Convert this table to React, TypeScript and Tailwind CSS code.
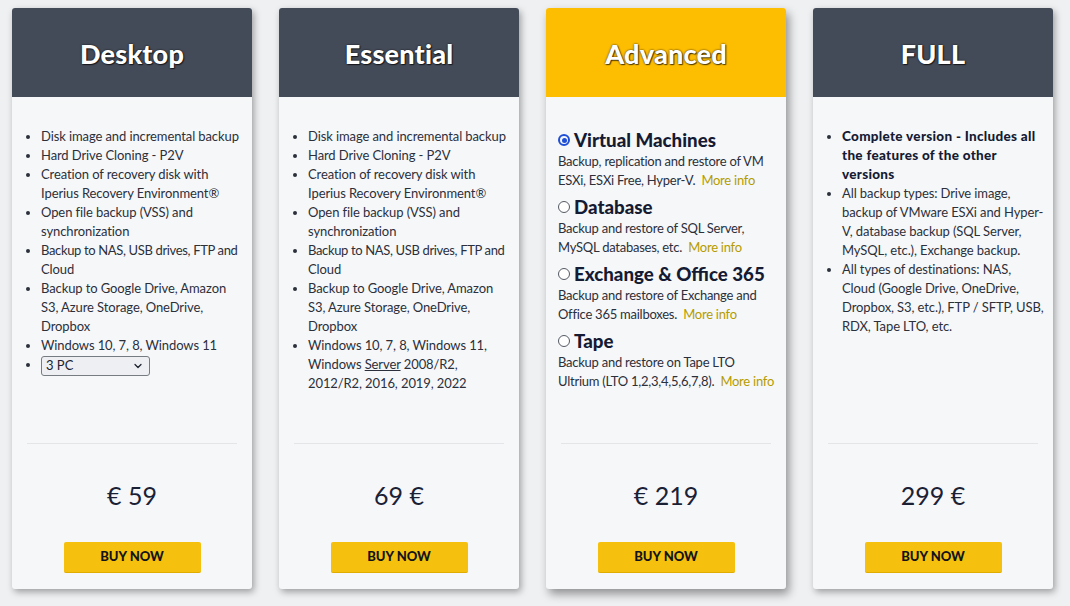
import { ChevronDown } from 'lucide-react';

const FONT = "font-['Lato',_'Open_Sans',_sans-serif]";

type Plan = {
  title: string;
  accent?: boolean;
  price: string;
  body: React.ReactNode;
};

const MORE = 'text-[#b49c00]';

function Bullets({ items }: { items: React.ReactNode[] }) {
  return (
    <ul className="list-disc pl-[14px] pt-[1px] text-[13px] leading-[19px] tracking-[-0.1px] text-[#2b303b] marker:text-[#2b303b]">
      {items.map((it, i) => (
        <li key={i}>{it}</li>
      ))}
    </ul>
  );
}

function Radio({ checked }: { checked?: boolean }) {
  return checked ? (
    <span className="mr-[4px] inline-flex h-[12px] w-[12px] shrink-0 items-center justify-center rounded-full border-[2px] border-[#1f4fd6]">
      <span className="h-[5px] w-[5px] rounded-full bg-[#1f4fd6]" />
    </span>
  ) : (
    <span className="mr-[4px] inline-block h-[12px] w-[12px] shrink-0 rounded-full border-[1.5px] border-[#555a63] bg-white" />
  );
}

function Module({ title, checked, children }: { title: string; checked?: boolean; children: React.ReactNode }) {
  return (
    <div className="mb-[5px]">
      <div className="flex items-center text-[18.7px] font-black leading-[24px] text-[#151b33]">
        <Radio checked={checked} />
        {title}
      </div>
      <p className="text-[13px] leading-[19px] tracking-[-0.25px] text-[#2b303b]">{children}</p>
    </div>
  );
}

// keeps "FTP and" on the first line, as on the live page
const nasItem = (
  <>
    <span className="whitespace-nowrap tracking-[-0.35px]">Backup to NAS, USB drives, FTP and</span> Cloud
  </>
);

const plans: Plan[] = [
  {
    title: 'Desktop',
    price: '€ 59',
    body: (
      <Bullets
        items={[
          'Disk image and incremental backup',
          'Hard Drive Cloning - P2V',
          'Creation of recovery disk with Iperius Recovery Environment®',
          'Open file backup (VSS) and synchronization',
          nasItem,
          'Backup to Google Drive, Amazon S3, Azure Storage, OneDrive, Dropbox',
          'Windows 10, 7, 8, Windows 11',
          <span className="inline-flex h-[20px] w-[109px] items-center justify-between rounded-[3px] border border-[#777b82] bg-[#eeeff2] pl-[4px] pr-[5px] align-middle text-[13px] tracking-normal text-[#1d2230]">
            3 PC
            <ChevronDown size={12} strokeWidth={2.5} />
          </span>,
        ]}
      />
    ),
  },
  {
    title: 'Essential',
    price: '69 €',
    body: (
      <Bullets
        items={[
          'Disk image and incremental backup',
          'Hard Drive Cloning - P2V',
          'Creation of recovery disk with Iperius Recovery Environment®',
          'Open file backup (VSS) and synchronization',
          nasItem,
          'Backup to Google Drive, Amazon S3, Azure Storage, OneDrive, Dropbox',
          <>
            Windows 10, 7, 8, Windows 11, Windows <span className="underline">Server</span> 2008/R2, 2012/R2, 2016, 2019, 2022
          </>,
        ]}
      />
    ),
  },
  {
    title: 'Advanced',
    accent: true,
    price: '€ 219',
    body: (
      <div className="-ml-[3px] pt-[2px]">
        <Module title="Virtual Machines" checked>
          Backup, replication and restore of VM ESXi, ESXi Free, Hyper-V.&nbsp; <span className={MORE}>More info</span>
        </Module>
        <Module title="Database">
          Backup and restore of SQL Server, MySQL databases, etc.&nbsp; <span className={MORE}>More info</span>
        </Module>
        <Module title="Exchange & Office 365">
          Backup and restore of Exchange and Office 365 mailboxes.&nbsp; <span className={MORE}>More info</span>
        </Module>
        <Module title="Tape">
          Backup and restore on Tape LTO Ultrium (LTO 1,2,3,4,5,6,7,8).&nbsp; <span className={MORE}>More info</span>
        </Module>
      </div>
    ),
  },
  {
    title: 'FULL',
    price: '299 €',
    body: (
      <Bullets
        items={[
          <b className="text-[13.5px] font-black tracking-[0.3px] text-[#151b33]">
            Complete version - Includes all the features of the other versions
          </b>,
          'All backup types: Drive image, backup of VMware ESXi and Hyper-V, database backup (SQL Server, MySQL, etc.), Exchange backup.',
          'All types of destinations: NAS, Cloud (Google Drive, OneDrive, Dropbox, S3, etc.), FTP / SFTP, USB, RDX, Tape LTO, etc.',
        ]}
      />
    ),
  },
];

function PlanCard({ plan }: { plan: Plan }) {
  return (
    <div
      className={
        'flex h-[581px] w-[240px] flex-col rounded-[3px] bg-[#f6f7f9] ' +
        (plan.accent
          ? 'shadow-[3px_5px_10px_rgba(0,0,0,0.4)]'
          : 'shadow-[2px_3px_7px_rgba(0,0,0,0.35)]')
      }
    >
      <div
        className={
          'flex h-[89px] items-center justify-center rounded-t-[3px] pt-[4px] ' +
          (plan.accent ? 'bg-[#fdbd00]' : 'bg-[#444b58]')
        }
      >
        <h2 className="text-[27px] font-black tracking-[0.2px] text-white [text-shadow:0_0_2px_rgba(0,0,0,0.85),1px_1px_1px_rgba(0,0,0,0.6)]">
          {plan.title}
        </h2>
      </div>

      <div className="flex-1 pl-[15px] pr-[9px] pt-[29px]">{plan.body}</div>

      <div className="mx-[15px] h-px bg-[#e3e5e8]" />

      <div className="flex flex-col items-center pt-[38px] pb-[16px]">
        <div className="text-[25px] font-normal leading-[26px] text-[#1b2135]">{plan.price}</div>
        <button className="mt-[34px] h-[31px] w-[137px] rounded-[2px] border-b border-[#e0ac00] bg-[#f5c10e] text-[13px] font-black uppercase text-[#12141a]">
          Buy now
        </button>
      </div>
    </div>
  );
}

export default function App() {
  return (
    <div className={`${FONT} min-h-[606px] w-[1070px] bg-[#eff0f2] pl-[12px] pt-[8px]`}>
      <div className="flex gap-[27px]">
        {plans.map((p) => (
          <PlanCard key={p.title} plan={p} />
        ))}
      </div>
    </div>
  );
}
